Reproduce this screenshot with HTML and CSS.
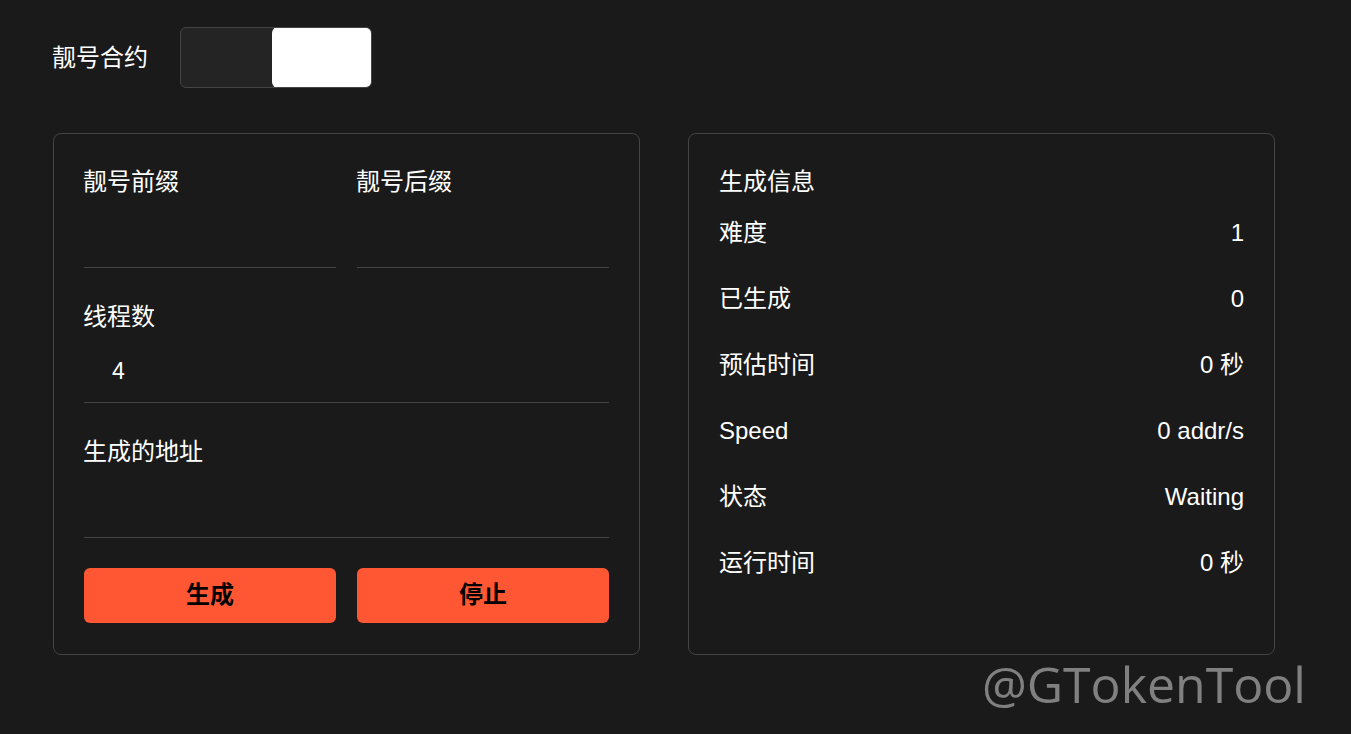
FILE: index.html
```html
<!DOCTYPE html>
<html lang="zh">
<head>
<meta charset="utf-8">
<title>靓号合约</title>
<link rel="stylesheet" href="styles.css">
</head>
<body>
<div class="page">
  <div class="top-row">
    <span class="top-label">靓号合约</span>
    <div class="toggle">
      <span class="toggle-off"></span>
      <span class="toggle-on"></span>
    </div>
  </div>
  <div class="cards">
    <div class="card">
      <div class="field-row">
        <div class="field">
          <label class="field-label">靓号前缀</label>
          <input class="field-input" type="text">
        </div>
        <div class="field">
          <label class="field-label">靓号后缀</label>
          <input class="field-input" type="text">
        </div>
      </div>
      <div class="field">
        <label class="field-label">线程数</label>
        <input class="field-input" type="text" value="4">
      </div>
      <div class="field field-last">
        <label class="field-label">生成的地址</label>
        <input class="field-input" type="text">
      </div>
      <div class="buttons">
        <button class="btn">生成</button>
        <button class="btn">停止</button>
      </div>
    </div>
    <div class="card">
      <div class="info-title">生成信息</div>
      <div class="info-row"><span>难度</span><span>1</span></div>
      <div class="info-row"><span>已生成</span><span>0</span></div>
      <div class="info-row"><span>预估时间</span><span>0 秒</span></div>
      <div class="info-row"><span>Speed</span><span>0 addr/s</span></div>
      <div class="info-row"><span>状态</span><span>Waiting</span></div>
      <div class="info-row"><span>运行时间</span><span>0 秒</span></div>
    </div>
  </div>
</div>
<div class="watermark">@GTokenTool</div>
</body>
</html>
```

FILE: styles.css
```css
html, body {
  margin: 0;
  padding: 0;
  background: #1a1a1a;
  color: #ffffff;
  font-family: "Liberation Sans", "Noto Sans CJK SC", sans-serif;
  font-size: 24px;
  line-height: 36px;
  height: 100%;
  overflow: hidden;
}

.page {
  padding: 27px 0 0 53px;
  width: 1222px;
}

.top-row {
  display: flex;
  align-items: center;
  gap: 32px;
  height: 61px;
}

.top-label {
  margin-left: -1px;
}

.toggle {
  display: flex;
  width: 192px;
  height: 61px;
  box-sizing: border-box;
  border: 1px solid #444444;
  border-radius: 6px;
  background: #242424;
  overflow: hidden;
}

.toggle-off {
  flex: 1;
}

.toggle-on {
  width: 100px;
  margin: -1px -1px -1px 0;
  background: #ffffff;
  border-radius: 6px;
}

.cards {
  display: flex;
  gap: 48px;
  margin-top: 45px;
}

.card {
  width: 587px;
  box-sizing: border-box;
  border: 1px solid #444444;
  border-radius: 8px;
  padding: 30px 30px 31px 30px;
  display: flex;
  flex-direction: column;
}

.field-row {
  display: flex;
  gap: 21px;
}

.field-row .field {
  flex: 1 1 0;
  min-width: 0;
}

.field {
  display: flex;
  flex-direction: column;
  margin-bottom: 31px;
}

.field-last {
  margin-bottom: 30px;
}

.field-label {
  display: block;
  margin-left: -1px;
}

.field-input {
  width: 100%;
  min-width: 0;
  height: 68px;
  box-sizing: border-box;
  background: transparent;
  border: none;
  border-bottom: 1px solid #444444;
  outline: none;
  color: #ffffff;
  font-family: "Liberation Sans", "Noto Sans CJK SC", sans-serif;
  font-size: 23px;
  padding: 6px 28px 0 28px;
  margin: 0;
}

.buttons {
  display: flex;
  gap: 21px;
}

.btn {
  flex: 1 1 0;
  height: 55px;
  border: none;
  border-radius: 6px;
  background: #ff5733;
  color: #000000;
  font-family: "Liberation Sans", "Noto Sans CJK SC", sans-serif;
  font-size: 24px;
  line-height: 30px;
  font-weight: bold;
  padding: 0 0 2px 0;
}

.info-title {
  line-height: 36px;
}

.info-row {
  display: flex;
  justify-content: space-between;
  padding: 15px 0;
}

.watermark {
  position: absolute;
  right: 45px;
  top: 649px;
  font-family: "Open Sans", "Noto Sans", sans-serif;
  font-size: 50px;
  line-height: 70px;
  color: #808080;
}
```
